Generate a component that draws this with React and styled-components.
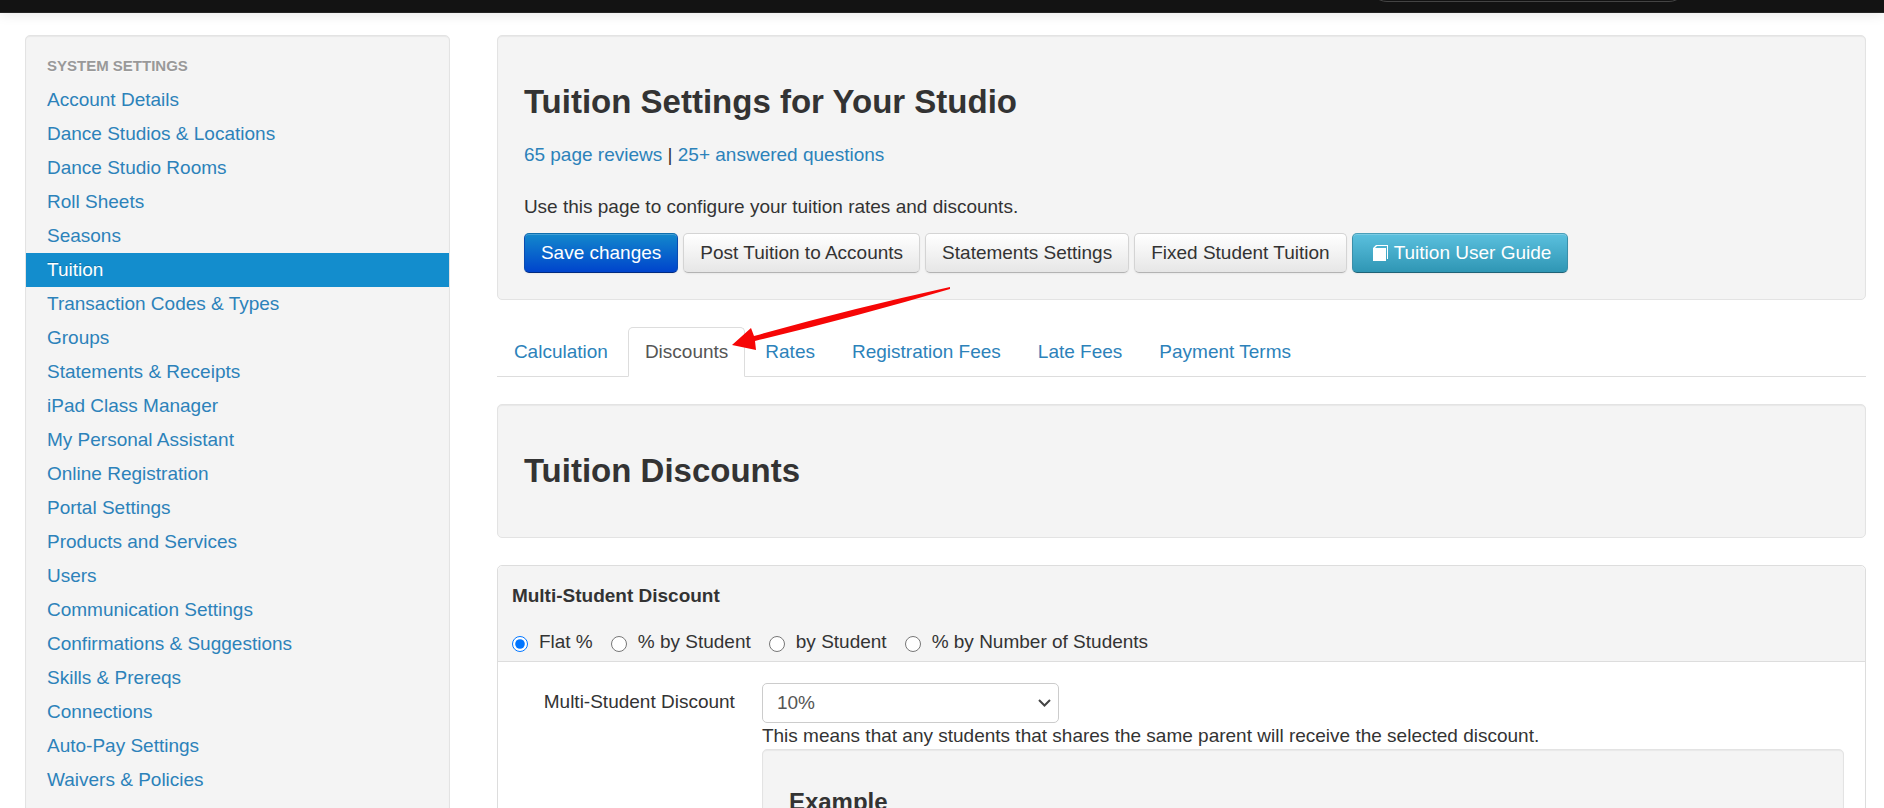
import React, { useState } from 'react'
import styled, { createGlobalStyle } from 'styled-components'

const GlobalStyle = createGlobalStyle`
  body {
    margin: 0;
    background: #fff;
    color: #333;
    font-family: "Liberation Sans", Arial, sans-serif;
    font-size: 19px;
    line-height: 26px;
  }
  a {
    color: #2c82ba;
    text-decoration: none;
  }
`

const Page = styled.div`
  height: 100vh;
  overflow: hidden;
`
const Navbar = styled.header`
  display: flex;
  justify-content: flex-end;
  height: 12px;
  padding-right: 197px;
  background: #131313;
  border-bottom: 1px solid #252525;
  box-shadow: 0 1px 13px rgba(0, 0, 0, 0.1);
`
const NavSearch = styled.div`
  box-sizing: border-box;
  width: 318px;
  height: 36px;
  margin-top: -34px;
  border: 1px solid #444;
  border-radius: 18px;
`
const Columns = styled.div`
  display: grid;
  grid-template-columns: 9fr 29fr;
  gap: 47px;
  padding: 22px 18px 0 25px;
`
const Well = styled.div`
  box-sizing: border-box;
  padding: 26px;
  background: #f4f4f4;
  border: 1px solid #e3e3e3;
  border-radius: 5px;
  box-shadow: inset 0 1px 1px rgba(0, 0, 0, 0.05);
`
const Sidebar = styled(Well)`
  padding: 13px 0;
`
const NavHeader = styled.h2`
  margin: 0;
  padding: 4px 21px;
  color: #999;
  font-size: 15px;
  line-height: 26px;
  text-transform: uppercase;
  text-shadow: 0 1px 0 rgba(255, 255, 255, 0.5);
`
const NavList = styled.ul`
  margin: 0;
  padding: 0;
  list-style: none;
`
const NavLink = styled.a`
  display: block;
  padding: 4px 21px;
  ${props => props.$active && `
    color: #fff;
    background: #138dcd;
    text-shadow: 0 -1px 0 rgba(0, 0, 0, 0.2);
  `}
`
const Main = styled.main`
  min-width: 0;
`
const Title = styled.h1`
  margin: 14px 0;
  font-size: 33px;
  line-height: 52px;
`
const Reviews = styled.div`
  margin-bottom: 26px;
`
const Buttons = styled.div`
  display: flex;
  flex-wrap: wrap;
  gap: 5px;
  margin-top: 13px;
`
const looks = {
  plain: 'color: #333; background: linear-gradient(#fff, #e6e6e6); border-color: #d4d4d4 #d4d4d4 #b3b3b3;',
  primary: 'color: #fff; background: linear-gradient(#1388cc, #0044cc); border-color: #0f6fae #0a4bb0 #002a80;',
  info: 'color: #fff; background: linear-gradient(#5bc0de, #2f96b4); border-color: #4a9fb9 #3a8fa9 #1f6377;',
}
const Button = styled.button`
  display: flex;
  align-items: center;
  gap: 5px;
  padding: 6px 16px;
  border: 1px solid;
  border-radius: 5px;
  font: inherit;
  cursor: pointer;
  box-shadow: inset 0 1px 0 rgba(255, 255, 255, 0.2), 0 1px 2px rgba(0, 0, 0, 0.05);
  ${props => looks[props.$look]}
`
const Tabs = styled.nav`
  position: relative;
  display: flex;
  gap: 3px;
  margin: 27px 0;
  border-bottom: 1px solid #ddd;
`
const Tab = styled.a`
  padding: 11px 16px;
  margin-bottom: -1px;
  border: 1px solid transparent;
  border-radius: 5px 5px 0 0;
  ${props => props.$active && `
    color: #555;
    background: #fff;
    border-color: #ddd #ddd #fff;
  `}
`
const Arrow = styled.svg`
  position: absolute;
  left: 233px;
  top: -41px;
  width: 224px;
  height: 68px;
  pointer-events: none;
`
const Panel = styled.section`
  margin-top: 27px;
  border: 1px solid #ddd;
  border-radius: 5px;
`
const PanelHeader = styled.div`
  padding: 17px 14px 6px;
  background: #f4f4f4;
  border-bottom: 1px solid #ddd;
  border-radius: 5px 5px 0 0;
`
const PanelTitle = styled.h2`
  margin: 0 0 20px;
  font-size: 19px;
  line-height: 26px;
`
const Radios = styled.div`
  display: flex;
  gap: 18px;
`
const RadioLabel = styled.label`
  display: flex;
  gap: 11px;
`
const Radio = styled.input`
  width: 16px;
  height: 16px;
  margin: 7px 0 0;
`
const PanelBody = styled.div`
  display: flex;
  gap: 27px;
  padding: 21px 21px 0 0;
`
const FieldLabel = styled.label`
  flex: 0 0 237px;
  padding-top: 6px;
  text-align: right;
`
const Field = styled.div`
  flex: 1;
`
const SelectBox = styled.div`
  position: relative;
  width: 297px;
`
const Select = styled.select`
  appearance: none;
  display: block;
  width: 100%;
  height: 40px;
  padding: 0 14px;
  color: #555;
  background: #fff;
  border: 1px solid #ccc;
  border-radius: 5px;
  font: inherit;
`
const Chevron = styled.svg`
  position: absolute;
  right: 8px;
  top: 16px;
  width: 13px;
  height: 9px;
  pointer-events: none;
`
const ExampleTitle = styled.h3`
  margin: 13px 0;
  font-size: 24px;
  line-height: 26px;
`

const links = [
  'Account Details',
  'Dance Studios & Locations',
  'Dance Studio Rooms',
  'Roll Sheets',
  'Seasons',
  'Tuition',
  'Transaction Codes & Types',
  'Groups',
  'Statements & Receipts',
  'iPad Class Manager',
  'My Personal Assistant',
  'Online Registration',
  'Portal Settings',
  'Products and Services',
  'Users',
  'Communication Settings',
  'Confirmations & Suggestions',
  'Skills & Prereqs',
  'Connections',
  'Auto-Pay Settings',
  'Waivers & Policies',
]
const tabs = ['Calculation', 'Discounts', 'Rates', 'Registration Fees', 'Late Fees', 'Payment Terms']
const methods = ['Flat %', '% by Student', 'by Student', '% by Number of Students']

const BookIcon = () => (
  <svg width="20" height="16" viewBox="0 0 20 16" aria-hidden="true">
    <path d="M7 0h12v14h-1V1H8L6 3h11v13H4V3z" fill="#fff" />
  </svg>
)

const App = () => {
  const [method, setMethod] = useState('Flat %')

  return (
    <Page>
      <GlobalStyle />
      <Navbar>
        <NavSearch />
      </Navbar>
      <Columns>
        <Sidebar as="aside">
          <NavHeader>System Settings</NavHeader>
          <NavList>
            {links.map(link => (
              <li key={link}>
                <NavLink href="#" $active={link === 'Tuition'}>{link}</NavLink>
              </li>
            ))}
          </NavList>
        </Sidebar>
        <Main>
          <Well>
            <Title>Tuition Settings for Your Studio</Title>
            <Reviews>
              <a href="#">65 page reviews</a> | <a href="#">25+ answered questions</a>
            </Reviews>
            <div>Use this page to configure your tuition rates and discounts.</div>
            <Buttons>
              <Button $look="primary">Save changes</Button>
              <Button $look="plain">Post Tuition to Accounts</Button>
              <Button $look="plain">Statements Settings</Button>
              <Button $look="plain">Fixed Student Tuition</Button>
              <Button $look="info"><BookIcon />Tuition User Guide</Button>
            </Buttons>
          </Well>
          <Tabs>
            {tabs.map(tab => (
              <Tab key={tab} href="#" $active={tab === 'Discounts'}>{tab}</Tab>
            ))}
            <Arrow viewBox="0 0 224 68" aria-hidden="true">
              <path d="M2 59L21 42L24 50Q120 23 220 1L220 3Q125 31 25 55L26 64z" fill="#f60606" />
            </Arrow>
          </Tabs>
          <Well>
            <Title>Tuition Discounts</Title>
          </Well>
          <Panel>
            <PanelHeader>
              <PanelTitle>Multi-Student Discount</PanelTitle>
              <Radios>
                {methods.map(item => (
                  <RadioLabel key={item}>
                    <Radio
                      type="radio"
                      name="method"
                      checked={method === item}
                      onChange={() => setMethod(item)}
                    />
                    {item}
                  </RadioLabel>
                ))}
              </Radios>
            </PanelHeader>
            <PanelBody>
              <FieldLabel htmlFor="discount">Multi-Student Discount</FieldLabel>
              <Field>
                <SelectBox>
                  <Select id="discount" defaultValue="10%">
                    <option>10%</option>
                  </Select>
                  <Chevron viewBox="0 0 13 9" aria-hidden="true">
                    <path d="M1 1l5.500 5.500L12 1" fill="none" stroke="#444" strokeWidth="2" />
                  </Chevron>
                </SelectBox>
                <div>This means that any students that shares the same parent will receive the selected discount.</div>
                <Well>
                  <ExampleTitle>Example</ExampleTitle>
                </Well>
              </Field>
            </PanelBody>
          </Panel>
        </Main>
      </Columns>
    </Page>
  )
}

export default App
